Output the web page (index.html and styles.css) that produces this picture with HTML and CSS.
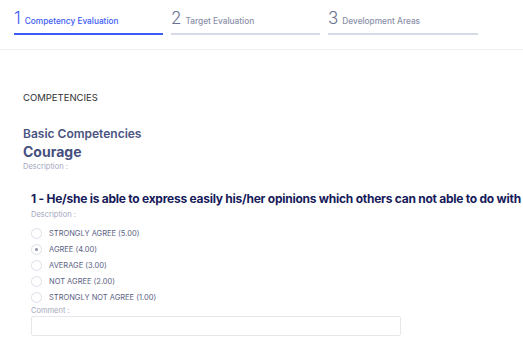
FILE: index.html
```html
<!DOCTYPE html>
<html>
<head>
<meta charset="utf-8">
<link rel="stylesheet" href="styles.css">
</head>
<body>
<header class="steps-bar">
  <div class="steps">
    <div class="step active"><span class="num">1</span><span class="label">Competency Evaluation</span></div>
    <div class="step"><span class="num">2</span><span class="label">Target Evaluation</span></div>
    <div class="step"><span class="num">3</span><span class="label">Development Areas</span></div>
  </div>
</header>
<main class="content">
  <div class="section-title">COMPETENCIES</div>
  <div class="group-title">Basic Competencies</div>
  <div class="comp-title">Courage</div>
  <div class="desc">Description :</div>
  <div class="question">
    <div class="q-title">1 - He/she is able to express easily his/her opinions which others can not able to do with</div>
    <div class="desc">Description :</div>
    <ul class="options">
      <li class="option"><span class="radio"></span><span>STRONGLY AGREE (5.00)</span></li>
      <li class="option"><span class="radio checked"></span><span>AGREE (4.00)</span></li>
      <li class="option"><span class="radio"></span><span>AVERAGE (3.00)</span></li>
      <li class="option"><span class="radio"></span><span>NOT AGREE (2.00)</span></li>
      <li class="option"><span class="radio"></span><span>STRONGLY NOT AGREE (1.00)</span></li>
    </ul>
    <div class="desc comment-label">Comment :</div>
    <div class="comment-box"></div>
  </div>
</main>
</body>
</html>
```
FILE: styles.css
```css
* { box-sizing: border-box; }
body {
  margin: 0;
  font-family: "Inter", "Noto Sans", sans-serif;
  background: #fff;
  width: 523px;
  overflow: hidden;
}
.steps-bar {
  height: 50px;
  border-bottom: 1px solid #eeeff2;
}
.steps {
  display: flex;
  gap: 8px;
  padding: 8px 0 0 14px;
}
.step {
  width: 149px;
  height: 27px;
  border-bottom: 2px solid #d6d9e6;
  display: flex;
  align-items: baseline;
  gap: 4px;
  color: #8a90a8;
}
.step:last-child { width: 150px; }
.step.active {
  border-bottom-color: #3d5cf5;
  color: #3d5cf5;
}
.num {
  font-size: 17px;
  font-weight: 300;
  line-height: 20px;
}
.step .num { color: #6b7290; }
.step.active .num { color: #3d5cf5; }
.label {
  font-size: 8.3px;
  font-weight: 500;
}
.content {
  padding: 42px 0 0 23px;
}
.section-title {
  font-size: 9.5px;
  color: #2f3033;
  line-height: 12px;
  margin-bottom: 22px;
}
.group-title {
  font-size: 12px;
  font-weight: 600;
  color: #4a5382;
  line-height: 16px;
}
.comp-title {
  font-size: 14px;
  font-weight: 700;
  color: #454f80;
  line-height: 19px;
}
.desc {
  font-size: 7.5px;
  color: #a3a7bd;
  line-height: 12px;
}
.question {
  padding-left: 8px;
  margin-top: 18px;
}
.q-title {
  font-size: 12px;
  font-weight: 700;
  letter-spacing: -0.25px;
  color: #171b5a;
  white-space: nowrap;
  line-height: 16px;
  margin-bottom: 2px;
}
.options {
  list-style: none;
  margin: 7px 0 0;
  padding: 0;
  display: flex;
  flex-direction: column;
  gap: 5px;
}
.option {
  display: flex;
  align-items: center;
  gap: 7px;
  height: 11px;
  font-size: 7.5px;
  color: #5b6283;
}
.radio {
  width: 11px;
  height: 11px;
  border-radius: 50%;
  border: 1px solid #dcdfe8;
  display: flex;
  align-items: center;
  justify-content: center;
}
.radio.checked::after {
  content: "";
  width: 3px;
  height: 3px;
  border-radius: 50%;
  background: #8a90a8;
}
.comment-label {
  margin-top: 3px;
  line-height: 10px;
}
.comment-box {
  margin-top: 0;
  width: 370px;
  height: 20px;
  border: 1px solid #e6e7ea;
  border-radius: 2px;
}
```
